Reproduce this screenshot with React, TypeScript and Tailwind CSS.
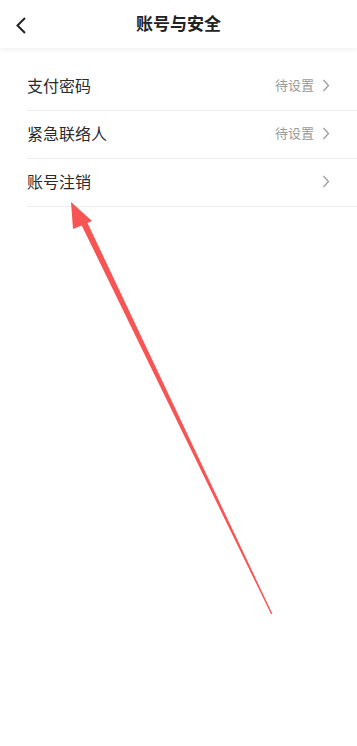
import React from "react";

const font = { fontFamily: '"Noto Sans CJK SC", "Noto Sans", sans-serif' };

function ChevronRight() {
  return (
    <svg width="8" height="13" viewBox="0 0 8 13" className="ml-[8px]">
      <path d="M1.5 1 L6.5 6.5 L1.5 12" fill="none" stroke="#9a9a9a" strokeWidth="1.2" />
    </svg>
  );
}

function Row({ label, value }: { label: string; value?: string }) {
  return (
    <div className="flex h-[48px] items-center border-b border-[#eeeeee] pb-[3px] pr-[27px]">
      <span className="flex-1 text-[16px] text-[#2a2a2a]">{label}</span>
      {value && <span className="text-[13px] text-[#9a9a9a]">{value}</span>}
      <ChevronRight />
    </div>
  );
}

export default function App() {
  return (
    <div className="relative h-[746px] w-[357px] overflow-hidden bg-white" style={font}>
      <div className="relative flex h-[48px] items-center justify-center bg-white pb-[2px] shadow-[0_2px_6px_rgba(0,0,0,0.06)]">
        <svg width="12" height="20" viewBox="0 0 12 20" className="absolute left-[15px] top-[16px]">
          <path d="M10 2 L2.5 9.5 L10 17" fill="none" stroke="#222" strokeWidth="2" />
        </svg>
        <span className="text-[17px] font-bold text-[#222]">账号与安全</span>
      </div>
      <div className="mt-[15px] pl-[27px]">
        <Row label="支付密码" value="待设置" />
        <Row label="紧急联络人" value="待设置" />
        <Row label="账号注销" />
      </div>
      <svg className="pointer-events-none absolute left-0 top-0" width="357" height="746" viewBox="0 0 357 746">
        <polygon
          points="71,202 92,221 87.5,222.9 272.5,614 271,614 81.7,225.4 73,229"
          fill="#f75454"
        />
      </svg>
    </div>
  );
}
